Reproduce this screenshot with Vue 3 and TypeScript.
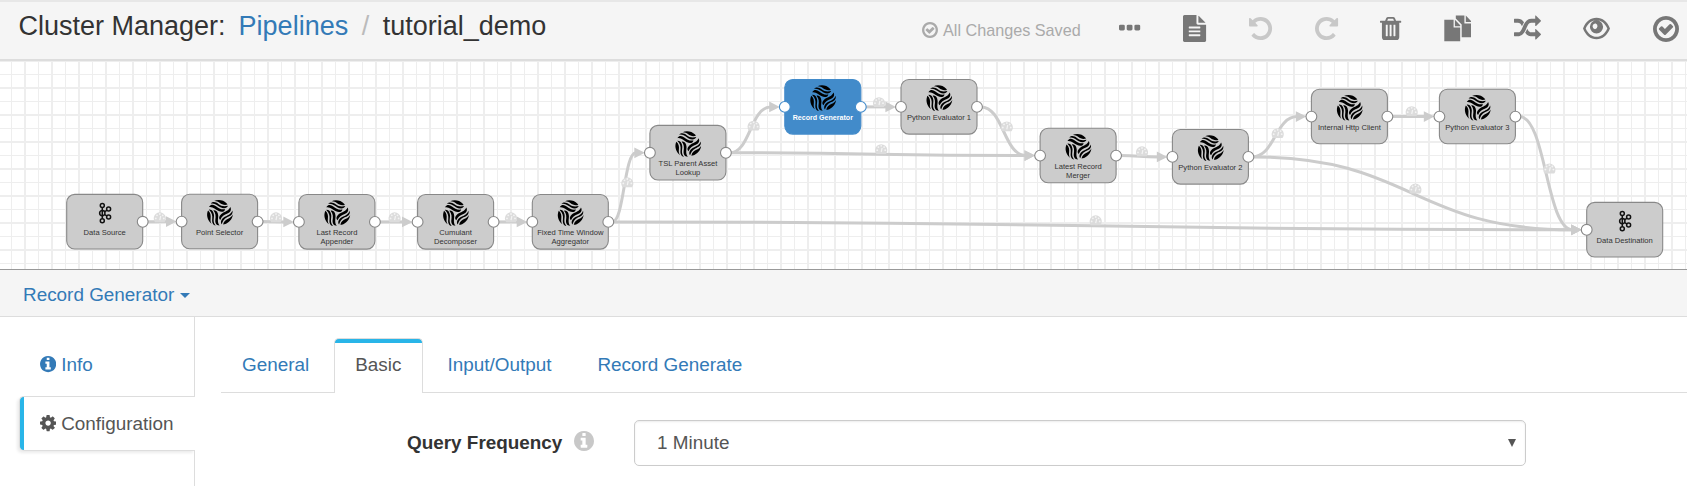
<script setup lang="ts">
interface PipelineNode {
  x: number
  y: number
  kind: 'stage' | 'kafka'
  lines: string[]
  input: boolean
  output: boolean
  selected?: boolean
}

interface Point {
  x: number
  y: number
}

interface ToolIcon {
  name: string
  path: string
  width: number
  size: number
  box: string
  disabled?: boolean
  flip?: boolean
}

const NODE_W = 76
const NODE_H = 54.6
const PORT_Y = 27.4

const nodes: Record<string, PipelineNode> = {
  source: { x: 66.7, y: 194.4, kind: 'kafka', lines: ['Data Source'], input: false, output: true },
  selector: { x: 181.6, y: 194.2, kind: 'stage', lines: ['Point Selector'], input: true, output: true },
  appender: { x: 298.9, y: 194.5, kind: 'stage', lines: ['Last Record', 'Appender'], input: true, output: true },
  decomposer: { x: 417.6, y: 194.5, kind: 'stage', lines: ['Cumulant', 'Decomposer'], input: true, output: true },
  aggregator: { x: 532.3, y: 194.5, kind: 'stage', lines: ['Fixed Time Window', 'Aggregator'], input: true, output: true },
  lookup: { x: 649.9, y: 125.4, kind: 'stage', lines: ['TSL Parent Asset', 'Lookup'], input: true, output: true },
  generator: { x: 784.8, y: 79.5, kind: 'stage', lines: ['Record Generator'], input: true, output: true, selected: true },
  python1: { x: 901, y: 79.5, kind: 'stage', lines: ['Python Evaluator 1'], input: true, output: true },
  merger: { x: 1040.1, y: 128.2, kind: 'stage', lines: ['Latest Record', 'Merger'], input: true, output: true },
  python2: { x: 1172.4, y: 129.5, kind: 'stage', lines: ['Python Evaluator 2'], input: true, output: true },
  http: { x: 1311.4, y: 89.2, kind: 'stage', lines: ['Internal Http Client'], input: true, output: true },
  python3: { x: 1439.4, y: 89.2, kind: 'stage', lines: ['Python Evaluator 3'], input: true, output: true },
  destination: { x: 1586.7, y: 202.4, kind: 'kafka', lines: ['Data Destination'], input: true, output: false },
}

const links: [string, string][] = [
  ['source', 'selector'],
  ['selector', 'appender'],
  ['appender', 'decomposer'],
  ['decomposer', 'aggregator'],
  ['aggregator', 'lookup'],
  ['aggregator', 'destination'],
  ['lookup', 'generator'],
  ['lookup', 'merger'],
  ['generator', 'python1'],
  ['python1', 'merger'],
  ['merger', 'python2'],
  ['python2', 'http'],
  ['python2', 'destination'],
  ['http', 'python3'],
  ['python3', 'destination'],
]

const gauges: Point[] = [
  { x: 159.8, y: 217.2 },
  { x: 276, y: 217.2 },
  { x: 394.6, y: 217.2 },
  { x: 511, y: 217.2 },
  { x: 627.3, y: 182.2 },
  { x: 753.6, y: 125.5 },
  { x: 879, y: 102 },
  { x: 881.2, y: 149 },
  { x: 1006.8, y: 126.3 },
  { x: 1095.7, y: 220.2 },
  { x: 1142, y: 151.2 },
  { x: 1277.7, y: 133 },
  { x: 1411.7, y: 111 },
  { x: 1415.4, y: 188.4 },
  { x: 1549.4, y: 168.4 },
]

function linkPath([from, to]: [string, string]): string {
  const a = nodes[from]
  const b = nodes[to]
  const sx = a.x + NODE_W + 4
  const sy = a.y + PORT_Y
  const tx = b.x - 14
  const ty = b.y + PORT_Y
  const mid = (sx + tx) / 2
  return `M${sx} ${sy}C${mid} ${sy} ${mid} ${ty} ${tx} ${ty}`
}

function arrowPath(to: string): string {
  const b = nodes[to]
  const y = b.y + PORT_Y
  return `M${b.x - 15.6} ${y - 5.4}L${b.x - 5} ${y}L${b.x - 15.6} ${y + 5.4}Z`
}

const checkCircle =
  'M1299 813l-422 422q-19 19-45 19t-45-19l-294-294q-19-19-19-45t19-45l102-102q19-19 45-19t45 19l147 147 275-275q19-19 45-19t45 19l102 102q19 19 19 45t-19 45zm141 83q0-148-73-273t-198-198-273-73-273 73-198 198-73 273 73 273 198 198 273 73 273-73 198-198 73-273zm224 0q0 209-103 385.5t-279.5 279.5-385.5 103-385.5-103-279.5-279.5-103-385.5 103-385.5 279.5-279.5 385.5-103 385.5 103 279.5 279.5 103 385.5z'
const infoCircle =
  'M1152 1376v-160q0-14-9-23t-23-9h-96v-512q0-14-9-23t-23-9h-320q-14 0-23 9t-9 23v160q0 14 9 23t23 9h96v320h-96q-14 0-23 9t-9 23v160q0 14 9 23t23 9h448q14 0 23-9t9-23zm-128-896v-160q0-14-9-23t-23-9h-192q-14 0-23 9t-9 23v160q0 14 9 23t23 9h192q14 0 23-9t9-23zm640 416q0 209-103 385.5t-279.5 279.5-385.5 103-385.5-103-279.5-279.5-103-385.5 103-385.5 279.5-279.5 385.5-103 385.5 103 279.5 279.5 103 385.5z'
const gear =
  'M1152 896q0-106-75-181t-181-75-181 75-75 181 75 181 181 75 181-75 75-181zm512-109v222q0 12-8 23t-20 13l-185 28q-19 54-39 91 35 50 107 138 10 12 10 25t-9 23q-27 37-99 108t-94 71q-12 0-26-9l-138-108q-44 23-91 38-16 136-29 186-7 28-36 28h-222q-14 0-24.5-8.5t-11.5-21.5l-28-184q-49-16-90-37l-141 107q-10 9-25 9-14 0-25-11-126-114-165-168-7-10-7-23 0-12 8-23 15-21 51-66.5t54-70.5q-27-50-41-99l-183-27q-13-2-21-12.5t-8-23.5v-222q0-12 8-23t19-13l186-28q14-46 39-92-40-57-107-138-10-12-10-24 0-10 9-23 26-36 98.5-107.5t94.5-71.5q13 0 26 10l138 107q44-23 91-38 16-136 29-186 7-28 36-28h222q14 0 24.5 8.5t11.5 21.5l28 184q49 16 90 37l142-107q9-9 24-9 13 0 25 10 129 119 165 170 7 8 7 22 0 12-8 23-15 21-51 66.5t-54 70.5q26 50 41 98l183 28q13 2 21 12.5t8 23.5z'
const undo =
  'M1664 896q0 156-61 298t-164 245-245 164-298 61q-172 0-327-72.5t-264-204.5q-7-10-6.5-22.5t8.5-20.5l137-138q10-9 25-9 16 2 23 12 73 95 179 147t225 52q104 0 198.5-40.5t163.5-109.5 109.5-163.5 40.5-198.5-40.5-198.5-109.5-163.5-163.5-109.5-198.5-40.5q-98 0-188 35.5t-160 101.5l137 138q31 30 14 69-17 40-59 40h-448q-26 0-45-19t-19-45v-448q0-42 40-59 39-17 69 14l130 129q107-101 244.5-156.5t284.5-55.5q156 0 298 61t245 164 164 245 61 298z'

const tools: ToolIcon[] = [
  {
    name: 'More', width: 21.2, size: 27, box: '192 0 1408 1792',
    path: 'M576 736v192q0 40-28 68t-68 28h-192q-40 0-68-28t-28-68v-192q0-40 28-68t68-28h192q40 0 68 28t28 68zm512 0v192q0 40-28 68t-68 28h-192q-40 0-68-28t-28-68v-192q0-40 28-68t68-28h192q40 0 68 28t28 68zm512 0v192q0 40-28 68t-68 28h-192q-40 0-68-28t-28-68v-192q0-40 28-68t68-28h192q40 0 68 28t28 68z',
  },
  {
    name: 'Notes', width: 23.1, size: 27, box: '128 0 1536 1792',
    path: 'M1596 476q14 14 28 36h-472v-472q22 14 36 28zm-476 164h544v1056q0 40-28 68t-68 28h-1344q-40 0-68-28t-28-68v-1600q0-40 28-68t68-28h800v544q0 40 28 68t68 28zm160 736v-64q0-14-9-23t-23-9h-704q-14 0-23 9t-9 23v64q0 14 9 23t23 9h704q14 0 23-9t9-23zm0-256v-64q0-14-9-23t-23-9h-704q-14 0-23 9t-9 23v64q0 14 9 23t23 9h704q14 0 23-9t9-23zm0-256v-64q0-14-9-23t-23-9h-704q-14 0-23 9t-9 23v64q0 14 9 23t23 9h704q14 0 23-9t9-23z',
  },
  { name: 'Undo', width: 23.1, size: 27, box: '128 0 1536 1792', path: undo, disabled: true },
  { name: 'Redo', width: 23.1, size: 27, box: '128 0 1536 1792', path: undo, disabled: true, flip: true },
  {
    name: 'Delete', width: 21.2, size: 27, box: '192 0 1408 1792',
    path: 'M704 1376v-704q0-14-9-23t-23-9h-64q-14 0-23 9t-9 23v704q0 14 9 23t23 9h64q14 0 23-9t9-23zm256 0v-704q0-14-9-23t-23-9h-64q-14 0-23 9t-9 23v704q0 14 9 23t23 9h64q14 0 23-9t9-23zm256 0v-704q0-14-9-23t-23-9h-64q-14 0-23 9t-9 23v704q0 14 9 23t23 9h64q14 0 23-9t9-23zm-544-992h448l-48-117q-7-9-17-11h-317q-10 2-17 11zm928 32v64q0 14-9 23t-23 9h-96v948q0 83-47 143.5t-113 60.5h-832q-66 0-113-58.5t-47-141.5v-952h-96q-14 0-23-9t-9-23v-64q0-14 9-23t23-9h309l70-167q15-37 54-63t79-26h320q40 0 79 26t54 63l70 167h309q14 0 23 9t9 23z',
  },
  {
    name: 'Duplicate', width: 27, size: 27, box: '0 0 27 27',
    path: 'M0.3 4.8H9.6V12.6H16.2V26.3H0.3ZM10.9 4.8L16.2 10.3V11.3H10.9ZM11.8 0.5H20.4V8.4H27V22.3H17.7V9.6L11.8 3.6ZM21.8 0.5L27 5.9V7.1H21.8Z',
  },
  {
    name: 'Auto arrange', width: 27, size: 27, box: '0 0 1792 1792',
    path: 'M666 481q-60 92-137 273-22-45-37-72.5t-40.5-63.5-51-56.5-63-35-81.5-14.5h-224q-14 0-23-9t-9-23v-192q0-14 9-23t23-9h224q250 0 410 225zm1126 799q0 14-9 23l-320 320q-9 9-23 9-13 0-22.5-9.5t-9.5-22.5v-192q-32 0-85 .5t-81 1-73-1-71-5-64-10.5-63-18.5-58-28.5-59-40-55-53.5-56-69.5q59-93 136-273 22 45 37 72.5t40.5 63.5 51 56.5 63 35 81.5 14.5h256v-192q0-14 9-23t23-9q12 0 24 10l319 319q9 9 9 23zm0-896q0 14-9 23l-320 320q-9 9-23 9-13 0-22.5-9.5t-9.5-22.5v-192h-256q-48 0-87 15t-69 45-51 61.5-45 77.5q-32 62-78 171-29 66-49.5 111t-54 105-64 100-74 83-90 68.5-106.5 42-128 16.5h-224q-14 0-23-9t-9-23v-192q0-14 9-23t23-9h224q48 0 87-15t69-45 51-61.5 45-77.5q32-62 78-171 29-66 49.5-111t54-105 64-100 74-83 90-68.5 106.5-42 128-16.5h256v-192q0-14 9-23t23-9q12 0 24 10l319 319q9 9 9 23z',
  },
  {
    name: 'Preview', width: 27, size: 27, box: '0 0 27 27',
    path: 'M13.5 2.8C19.5 2.8 24.3 6.5 27 13.5C24.3 20.5 19.5 24.2 13.5 24.2S2.7 20.5 0 13.5C2.7 6.5 7.5 2.8 13.5 2.8ZM13.5 5.2C9 5.2 5 8 2.7 13.5C5 19 9 21.8 13.5 21.8S22 19 24.3 13.5C22 8 18 5.2 13.5 5.2ZM13.5 5.2A6.6 6.6 0 0 0 13.5 18.4A6.6 6.6 0 0 0 13.5 5.2ZM12.8 8.4A2.9 2.9 0 0 0 9.6 11.4A3 3 0 0 0 12 14.2A3.1 3.1 0 0 0 12.8 8.4Z',
  },
  { name: 'Validate', width: 26, size: 26, box: '128 128 1536 1536', path: checkCircle },
]

const tabs = ['General', 'Basic', 'Input/Output', 'Record Generate']
</script>

<template>
  <div class="page">
    <header class="topbar">
      <h1 class="crumbs">
        <span class="crumb-root">Cluster Manager:</span>
        <a class="crumb-link">Pipelines</a>
        <span class="crumb-sep">/</span>
        <span>tutorial_demo</span>
      </h1>
      <div class="saved">
        <svg class="saved-icon" viewBox="128 128 1536 1536"><path :d="checkCircle" /></svg>
        <span>All Changes Saved</span>
      </div>
      <nav class="tools">
        <svg
          v-for="tool in tools"
          :key="tool.name"
          class="tool"
          :class="{ disabled: tool.disabled, flip: tool.flip }"
          :width="tool.width"
          :height="tool.size"
          :viewBox="tool.box"
          :aria-label="tool.name"
        >
          <path :d="tool.path" fill-rule="evenodd" />
        </svg>
      </nav>
    </header>

    <svg class="canvas" width="1687" height="208" viewBox="0 61 1687 208">
      <defs>
        <pattern id="grid" width="27" height="27" x="25" y="7" patternUnits="userSpaceOnUse">
          <path class="grid-minor" d="M13.5 0V27M0 13.5H27" />
          <path class="grid-major" d="M0 0V27M27 0V27M0 0H27M0 27H27" />
        </pattern>
        <g id="swirl-arm">
          <path d="M-10.6 -6.2C-8.8 -9.2 -6 -8.8 -3.6 -7C-0.8 -4.8 1.6 -3.4 5.6 -4C5 -1.2 1.8 -0.8 -1.4 -2.4C-4.2 -4 -6.6 -6.8 -10.6 -6.2Z" />
          <path d="M-8.8 -9.6C-6.6 -12 -3.8 -11.2 -1.2 -9.2C1.6 -7.2 4 -6.4 8.4 -7.4C7.4 -4.6 3.8 -4.4 0.8 -6C-2 -7.6 -4.4 -10.6 -8.8 -9.6Z" />
          <path d="M-5.4 -12.2C-1.4 -14 4 -13.2 7.2 -9.8C7.6 -9.3 7.8 -9 8 -8.6C4.8 -7.6 2.4 -8.6 0 -10.4C-1.6 -11.6 -3.2 -12.4 -5.4 -12.2Z" />
        </g>
        <g id="swirl">
          <use href="#swirl-arm" />
          <use href="#swirl-arm" transform="rotate(120)" />
          <use href="#swirl-arm" transform="rotate(240)" />
        </g>
        <g id="kafka" class="kafka">
          <path d="M-2.4 -5.5V5.5M0 -1.5L2.6 -3M0 1.5L2.6 3" />
          <circle cx="-2.4" cy="-7.7" r="2" />
          <circle cx="-2.4" cy="0" r="2.7" />
          <circle cx="-2.4" cy="7.7" r="2" />
          <circle cx="3.9" cy="-4" r="2" />
          <circle cx="3.9" cy="4" r="2" />
        </g>
        <g id="gauge">
          <path class="gauge-body" d="M-4.8 5A6.1 6.1 0 1 1 4.8 5Z" />
          <circle class="gauge-dot" cx="-4" cy="1.2" r="0.9" />
          <circle class="gauge-dot" cx="-2.8" cy="-1.9" r="0.9" />
          <circle class="gauge-dot" cx="0" cy="-3.2" r="0.9" />
          <circle class="gauge-dot" cx="2.9" cy="-1.9" r="0.9" />
          <circle class="gauge-dot" cx="4" cy="1.2" r="0.9" />
          <path class="gauge-needle" d="M0 3L0.9 -1.2" />
        </g>
      </defs>

      <rect x="0" y="61" width="1687" height="208" fill="url(#grid)" />

      <g v-for="link in links" :key="link.join('-')">
        <path class="link" :d="linkPath(link)" />
        <path class="arrow" :d="arrowPath(link[1])" />
      </g>
      <use v-for="(g, i) in gauges" :key="i" href="#gauge" :x="g.x" :y="g.y" />

      <g
        v-for="(node, id) in nodes"
        :key="id"
        class="node"
        :class="{ selected: node.selected }"
        :transform="`translate(${node.x} ${node.y})`"
      >
        <rect class="node-box" :width="NODE_W" :height="NODE_H" rx="8" />
        <use v-if="node.kind === 'stage'" href="#swirl" x="38" y="19" />
        <use v-else href="#kafka" x="38" y="18.7" />
        <text
          v-for="(line, n) in node.lines"
          :key="line"
          class="node-text"
          x="38"
          :y="40.7 + n * 8.8"
        >{{ line }}</text>
        <circle v-if="node.input" class="port" cx="0" :cy="PORT_Y" r="5.4" />
        <circle v-if="node.output" class="port" :cx="NODE_W" :cy="PORT_Y" r="5.4" />
      </g>
    </svg>

    <section class="detail">
      <div class="detail-head">
        <a>Record Generator</a>
        <i class="caret"></i>
      </div>
      <div class="detail-body">
        <aside class="side">
          <a class="side-item">
            <svg class="side-icon" viewBox="128 128 1536 1536"><path :d="infoCircle" /></svg>
            <span>Info</span>
          </a>
          <a class="side-item active">
            <svg class="side-icon" viewBox="128 128 1536 1536"><path :d="gear" /></svg>
            <span>Configuration</span>
          </a>
          <div class="side-rest"></div>
        </aside>
        <div class="content">
          <div class="tabs">
            <a v-for="tab in tabs" :key="tab" class="tab" :class="{ active: tab === 'Basic' }">{{ tab }}</a>
          </div>
          <div class="field">
            <label class="label">Query Frequency</label>
            <svg class="help" viewBox="128 128 1536 1536"><path :d="infoCircle" /></svg>
            <div class="select">
              <span>1 Minute</span>
              <i class="select-arrow"></i>
            </div>
          </div>
        </div>
      </div>
    </section>
  </div>
</template>

<style>
body {
  margin: 0;
  background: #fff;
}
</style>

<style scoped>
.page {
  width: 1687px;
  height: 486px;
  overflow: hidden;
  display: flex;
  flex-direction: column;
  font-family: "Liberation Sans", Arial, sans-serif;
  font-size: 18.9px;
  color: #333;
}

.topbar {
  box-sizing: border-box;
  flex: none;
  height: 61px;
  background: #f5f5f5;
  border-top: 2px solid #e7e7e7;
  border-bottom: 2px solid #ddd;
  display: flex;
  align-items: flex-start;
  white-space: nowrap;
}

.crumbs {
  display: flex;
  margin: 0;
  padding: 9px 0 0 18.5px;
  width: 904px;
  box-sizing: border-box;
  font-size: 27px;
  line-height: 31px;
  font-weight: 400;
}

.crumb-root {
  margin-right: 13px;
}

.crumb-link {
  color: #337ab7;
}

.crumb-sep {
  color: #bbb;
  margin: 0 13.5px;
}

.saved {
  display: flex;
  align-items: center;
  gap: 5px;
  width: 197px;
  padding: 18px 0 0 18px;
  box-sizing: border-box;
  font-size: 16.2px;
  line-height: 20px;
  color: #aaa;
}

.saved-icon {
  width: 16px;
  height: 16px;
  fill: #aaa;
}

.tools {
  display: flex;
  align-items: center;
  gap: 42.6px;
  padding: 13px 0 0 18.4px;
}

.tool {
  fill: #777;
  flex: none;
  overflow: visible;
}

.tool.disabled {
  fill: #c8c8c8;
}

.tool.flip {
  transform: scaleX(-1);
}

.canvas {
  display: block;
  flex: none;
}

.grid-minor {
  stroke: #eee;
  stroke-width: 1;
}

.grid-major {
  stroke: #eee;
  stroke-width: 2;
}

.link {
  fill: none;
  stroke: #ccc;
  stroke-width: 3;
}

.arrow {
  fill: #ccc;
}

.gauge-body {
  fill: #dcdcdc;
}

.gauge-dot {
  fill: #f4f4f4;
}

.gauge-needle {
  stroke: #f4f4f4;
  stroke-width: 1.2;
}

.node-box {
  fill: #ccc;
  stroke: #888;
  stroke-width: 1.1;
}

.node-text {
  font-size: 7.6px;
  text-anchor: middle;
  fill: #333;
}

.port {
  fill: #fff;
  stroke: #888;
  stroke-width: 1.1;
}

.selected .node-box {
  fill: #428bca;
  stroke: #428bca;
}

.selected .node-text {
  fill: #fff;
  font-weight: 700;
  font-size: 7.1px;
}

.selected .port {
  stroke: #428bca;
}

.kafka {
  fill: none;
  stroke: #111;
  stroke-width: 1.5;
}

.detail {
  flex: 1;
  display: flex;
  flex-direction: column;
  border-top: 1px solid #999;
}

.detail-head {
  flex: none;
  box-sizing: border-box;
  height: 47px;
  display: flex;
  align-items: center;
  gap: 6px;
  padding: 3px 0 0 23px;
  background: #f5f5f5;
  border-bottom: 1px solid #ddd;
  color: #337ab7;
}

.detail-head .caret {
  margin-top: 2px;
}

.caret {
  border-top: 5.4px solid #337ab7;
  border-left: 5.4px solid transparent;
  border-right: 5.4px solid transparent;
}

.detail-body {
  flex: 1;
  display: flex;
}

.side {
  width: 195px;
  flex: none;
  display: flex;
  flex-direction: column;
  padding-left: 18px;
  box-sizing: border-box;
}

.side-item {
  display: flex;
  align-items: center;
  gap: 5px;
  box-sizing: border-box;
  height: 79px;
  padding: 16px 0 0 22px;
  border-right: 1px solid #ddd;
  color: #337ab7;
  fill: #337ab7;
}

.side-item.active {
  height: 55px;
  margin-left: 1px;
  padding: 0 0 0 20px;
  border: 1px solid #ddd;
  border-right: 0;
  border-radius: 5px 0 0 5px;
  color: #555;
  fill: #555;
  background: linear-gradient(to right, #29b5e8 4px, #fff 4px);
  box-shadow: -2px 2px 3px rgba(0, 0, 0, 0.08);
}

.side-icon {
  width: 16.2px;
  height: 16.2px;
}

.side-rest {
  flex: 1;
  border-right: 1px solid #ddd;
}

.content {
  flex: 1;
  display: flex;
  flex-direction: column;
  padding: 20px 0 0 26px;
}

.tabs {
  display: flex;
  height: 55px;
  border-bottom: 1px solid #ddd;
  line-height: 22px;
}

.tab {
  box-sizing: border-box;
  height: 56px;
  padding: 16px 21px 0 20px;
  border: 1px solid transparent;
  margin-right: 3px;
  color: #337ab7;
}

.tab.active {
  margin-top: 1px;
  height: 55px;
  padding-top: 15px;
  color: #555;
  border-color: #ddd;
  border-bottom: 0;
  border-radius: 5px 5px 0 0;
  background: linear-gradient(to bottom, #29b5e8 4px, #fff 4px);
}

.field {
  display: flex;
  align-items: center;
  margin-top: 26px;
  height: 47px;
  padding-left: 186px;
}

.label {
  width: 167px;
  font-weight: 700;
}

.help {
  width: 20px;
  height: 20px;
  margin-bottom: 4px;
  fill: #c8c8c8;
}

.select {
  margin-left: 40px;
  box-sizing: border-box;
  width: 892px;
  height: 46px;
  padding: 0 9px 0 22px;
  display: flex;
  align-items: center;
  justify-content: space-between;
  border: 1px solid #ccc;
  border-radius: 5px;
  box-shadow: inset 0 1px 2px rgba(0, 0, 0, 0.08);
  color: #555;
}

.select-arrow {
  border-top: 8px solid #555;
  border-left: 4px solid transparent;
  border-right: 4px solid transparent;
}
</style>
